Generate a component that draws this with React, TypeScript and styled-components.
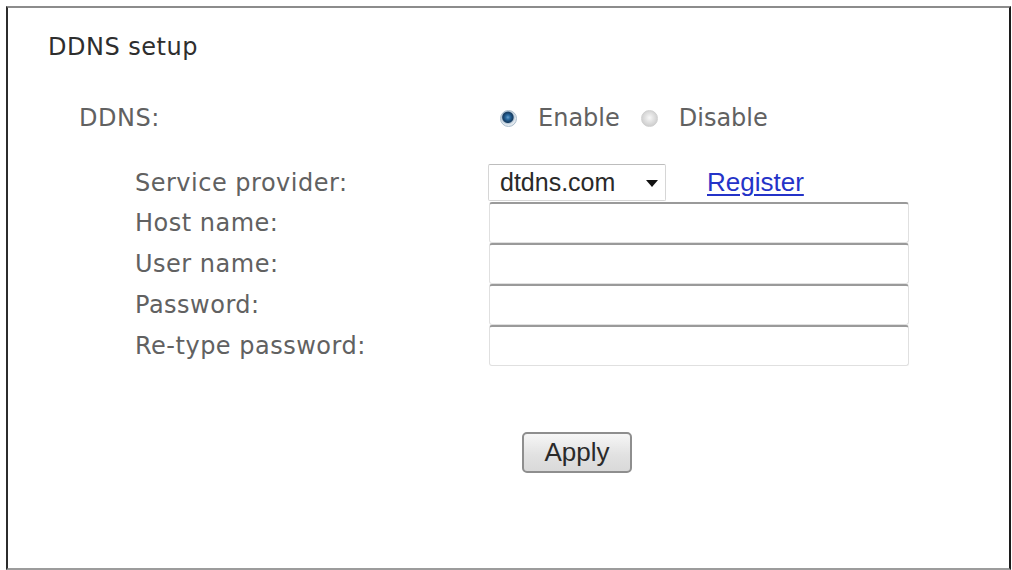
import React from "react";
import styled, { createGlobalStyle } from "styled-components";

const Global = createGlobalStyle`
  html, body { margin: 0; padding: 0; background: #fff; }
  body { width: 1012px; height: 570px; overflow: hidden; }
`;

const Frame = styled.div`
  box-sizing: border-box;
  margin: 6px 1px 0 6px;
  width: 1005px;
  height: 564px;
  border-top: 2px solid #8c8c8c;
  border-left: 2px solid #2c2c2c;
  border-right: 2px solid #1c1c1c;
  border-bottom: 2px solid #9c9c9c;
  padding-top: 25px;
  font-family: "DejaVu Sans", Verdana, sans-serif;
`;

const Heading = styled.h1`
  margin: 0;
  padding-left: 40px;
  font-size: 24px;
  font-weight: normal;
  line-height: 28px;
  letter-spacing: 0.5px;
  color: #2e2e2e;
`;

const Row = styled.div<{ $indent: number; $height: number; $top?: number }>`
  display: flex;
  align-items: center;
  height: ${(p) => p.$height}px;
  margin-top: ${(p) => p.$top ?? 0}px;
  padding-left: ${(p) => p.$indent - 8}px;
`;

const Label = styled.div<{ $indent: number }>`
  width: ${(p) => 489 - p.$indent}px;
  flex: none;
  font-size: 24px;
  line-height: 28px;
  letter-spacing: 0.5px;
  color: #616161;
`;

const RadioGroup = styled.div`
  display: flex;
  align-items: center;
  padding-left: 11px;
`;

const RadioMark = styled.span<{ $on?: boolean }>`
  box-sizing: border-box;
  width: 17px;
  height: 17px;
  border-radius: 50%;
  flex: none;
  margin-right: 21px;
  border: 1px solid ${(p) => (p.$on ? "#a9bccb" : "#cfcfcf")};
  background: ${(p) =>
    p.$on
      ? "radial-gradient(circle at 46% 42%, #6aa0cc 0, #2d6ea4 2px, #1b4a76 4px, #183e63 5.2px, #b7c8d6 6.2px, #e3e9ef 7.5px)"
      : "radial-gradient(circle at 50% 45%, #f8f8f8 0, #e3e3e3 4px, #d0d0d0 8px)"};
`;

const RadioText = styled.span`
  font-size: 24px;
  line-height: 28px;
  color: #616161;
  margin-right: 21px;
`;

const SelectBox = styled.div`
  box-sizing: border-box;
  width: 178px;
  height: 37px;
  margin-left: -1px;
  display: flex;
  align-items: center;
  justify-content: space-between;
  padding: 0 7px 0 11px;
  border: 1px solid #d6d6d6;
  border-top-color: #bdbdbd;
  border-radius: 2px;
  background: #fff;
  font-family: "Liberation Sans", Arial, sans-serif;
  font-size: 25px;
  color: #2a2a2a;
`;

const Arrow = styled.svg`
  width: 12px;
  height: 7px;
  flex: none;
  margin-top: 1px;
`;

const Link = styled.a`
  margin-left: 41px;
  font-family: "Liberation Sans", Arial, sans-serif;
  font-size: 26px;
  color: #2433c8;
  text-decoration: underline;
  text-underline-offset: 3px;
`;

const TextInput = styled.input`
  box-sizing: border-box;
  width: 420px;
  height: 41px;
  margin: 0;
  border: 1px solid #e0e0e0;
  border-top: 2px solid #9a9a9a;
  border-radius: 3px;
  background: #fff;
  outline: none;
`;

const ButtonRow = styled.div`
  display: flex;
  margin-top: 66px;
  padding-left: 514px;
`;

const Button = styled.button`
  box-sizing: border-box;
  width: 110px;
  height: 41px;
  border: 2px solid #8e8e8e;
  border-radius: 5px;
  background: linear-gradient(#f6f6f6, #e2e2e2 55%, #d9d9d9);
  font-family: "Liberation Sans", Arial, sans-serif;
  font-size: 26px;
  color: #2a2a2a;
  padding: 0;
`;

const fields = ["Host name:", "User name:", "Password:", "Re-type password:"];

export default function App() {
  return (
    <>
      <Global />
      <Frame>
        <Heading>DDNS setup</Heading>
        <Row $indent={79} $height={40} $top={37}>
          <Label $indent={79}>DDNS:</Label>
          <RadioGroup>
            <RadioMark $on />
            <RadioText>Enable</RadioText>
            <RadioMark />
            <RadioText>Disable</RadioText>
          </RadioGroup>
        </Row>
        <Row $indent={135} $height={39} $top={25}>
          <Label $indent={135}>Service provider:</Label>
          <SelectBox>
            <span>dtdns.com</span>
            <Arrow viewBox="0 0 12 7">
              <path d="M0 0 L12 0 L6 7 Z" fill="#111" />
            </Arrow>
          </SelectBox>
          <Link href="#">Register</Link>
        </Row>
        {fields.map((f) => (
          <Row key={f} $indent={135} $height={41}>
            <Label $indent={135}>{f}</Label>
            <TextInput type={f.includes("assword") ? "password" : "text"} />
          </Row>
        ))}
        <ButtonRow>
          <Button>Apply</Button>
        </ButtonRow>
      </Frame>
    </>
  );
}
